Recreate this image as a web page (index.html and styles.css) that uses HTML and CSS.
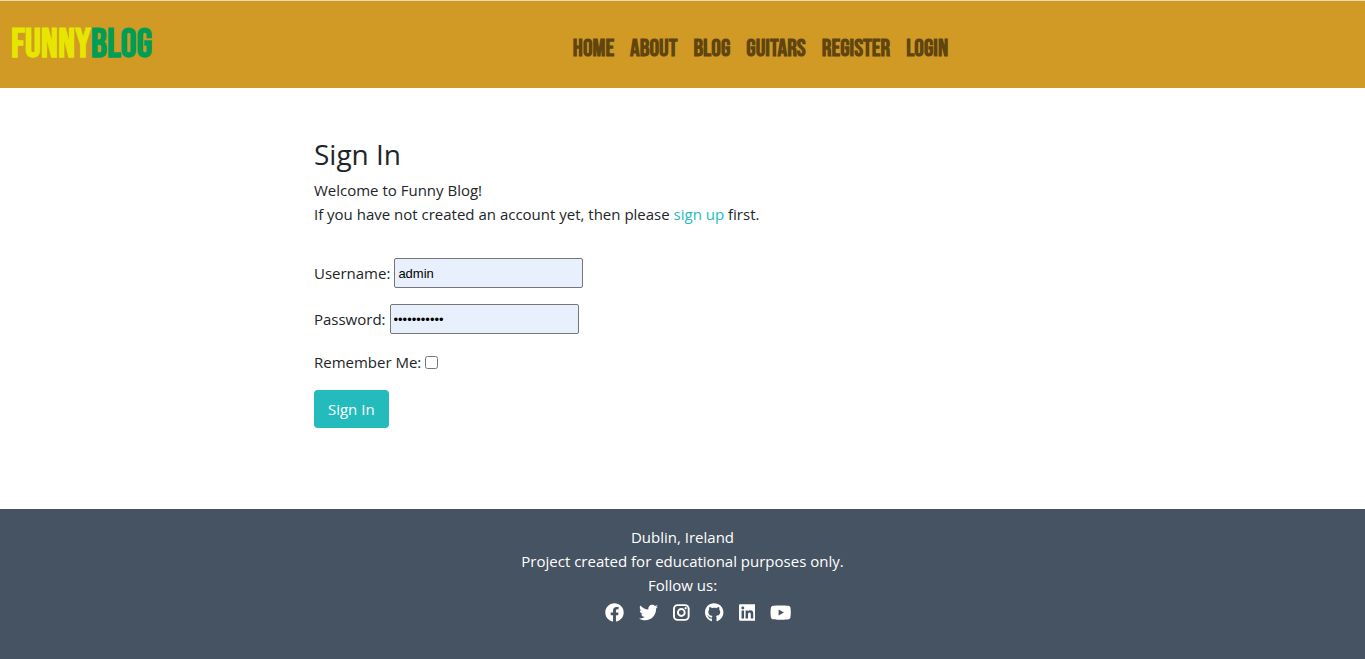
FILE: index.html
```html
<!DOCTYPE html>
<html lang="en">
<head>
<meta charset="utf-8">
<meta name="viewport" content="width=device-width, initial-scale=1">
<title>Funny Blog - Sign In</title>
<link rel="stylesheet" href="styles.css">
</head>
<body>
<header class="site-header">
  <a class="brand" href="#"><span class="brand-first">FUNNY</span><span class="brand-second">BLOG</span></a>
  <nav class="site-nav">
    <a href="#">HOME</a>
    <a href="#">ABOUT</a>
    <a href="#">BLOG</a>
    <a href="#">GUITARS</a>
    <a href="#">REGISTER</a>
    <a href="#">LOGIN</a>
  </nav>
</header>
<main class="content">
  <h1 class="title">Sign In</h1>
  <p class="intro">Welcome to Funny Blog!<br>If you have not created an account yet, then please <a class="link" href="#">sign up</a> first.</p>
  <form class="login-form">
    <div class="field"><label for="username">Username:</label><input class="text-input" id="username" type="text" value="admin"></div>
    <div class="field"><label for="password">Password:</label><input class="text-input" id="password" type="password" value="funnyblog12"></div>
    <div class="field"><label for="remember">Remember Me:</label><input class="check" id="remember" type="checkbox"></div>
    <button class="submit" type="submit">Sign In</button>
  </form>
</main>
<footer class="site-footer">
  <p>Dublin, Ireland</p>
  <p>Project created for educational purposes only.</p>
  <p>Follow us:</p>
  <div class="social">
    <a href="#" aria-label="Facebook"><svg viewBox="0 0 512 512"><path d="M504 256C504 119 393 8 256 8S8 119 8 256c0 123.78 90.69 226.38 209.25 245V327.69h-63V256h63v-54.64c0-62.15 37-96.48 93.67-96.48 27.14 0 55.52 4.84 55.52 4.84v61h-31.28c-30.8 0-40.41 19.12-40.41 38.73V256h68.78l-11 71.69h-57.78V501C413.31 482.38 504 379.78 504 256z"/></svg></a>
    <a href="#" aria-label="Twitter"><svg viewBox="0 0 512 512"><path d="M459.37 151.716c.325 4.548.325 9.097.325 13.645 0 138.72-105.583 298.558-298.558 298.558-59.452 0-114.68-17.219-161.137-47.106 8.447.974 16.568 1.299 25.34 1.299 49.055 0 94.213-16.568 130.274-44.832-46.132-.975-84.792-31.188-98.112-72.772 6.498.974 12.995 1.624 19.818 1.624 9.421 0 18.843-1.3 27.614-3.573-48.081-9.747-84.143-51.98-84.143-102.985v-1.299c13.969 7.797 30.214 12.67 47.431 13.319-28.264-18.843-46.781-51.005-46.781-87.391 0-19.492 5.197-37.36 14.294-52.954 51.655 63.675 129.3 105.258 216.365 109.807-1.624-7.797-2.599-15.918-2.599-24.04 0-57.828 46.782-104.934 104.934-104.934 30.213 0 57.502 12.67 76.67 33.137 23.715-4.548 46.456-13.32 66.599-25.34-7.798 24.366-24.366 44.833-46.132 57.827 21.117-2.273 41.584-8.122 60.426-16.243-14.292 20.791-32.161 39.308-52.628 54.253z"/></svg></a>
    <a href="#" aria-label="Instagram"><svg viewBox="0 0 448 512"><rect x="26" y="58" width="396" height="396" rx="100" fill="none" stroke="currentColor" stroke-width="52"/><circle cx="224" cy="256" r="92" fill="none" stroke="currentColor" stroke-width="52"/><circle cx="341" cy="139" r="30"/></svg></a>
    <a href="#" aria-label="GitHub"><svg viewBox="0 0 496 512"><path d="M244.8 8C106.1 8 0 113.3 0 252c0 110.9 69.8 205.8 169.5 239.2 12.8 2.3 17.3-5.6 17.3-12.1 0-6.2-.3-40.4-.3-61.4 0 0-70 15-84.7-29.8 0 0-11.4-29.1-27.8-36.6 0 0-22.9-15.7 1.6-15.4 0 0 24.9 2 38.6 25.8 21.9 38.6 58.6 27.5 72.9 20.9 2.3-16 8.8-27.1 16-33.7-55.9-6.2-112.3-14.3-112.3-110.5 0-27.5 7.6-41.3 23.6-58.9-2.6-6.5-11.1-33.3 2.6-67.9 20.9-6.5 69 27 69 27 20-5.6 41.5-8.5 62.8-8.5s42.8 2.9 62.8 8.5c0 0 48.1-33.6 69-27 13.7 34.7 5.2 61.4 2.6 67.9 16 17.7 25.8 31.5 25.8 58.9 0 96.5-58.9 104.2-114.8 110.5 9.2 7.9 17 22.9 17 46.4 0 33.7-.3 75.4-.3 83.6 0 6.5 4.6 14.4 17.3 12.1C428.2 457.8 496 362.9 496 252 496 113.3 383.5 8 244.8 8z"/></svg></a>
    <a href="#" aria-label="LinkedIn"><svg viewBox="0 0 448 512"><path d="M416 32H31.9C14.3 32 0 46.5 0 64.3v383.4C0 465.5 14.3 480 31.9 480H416c17.6 0 32-14.5 32-32.3V64.3c0-17.8-14.4-32.3-32-32.3zM135.4 416H69V202.2h66.5V416zm-33.2-243c-21.3 0-38.5-17.3-38.5-38.5S80.9 96 102.2 96c21.2 0 38.5 17.3 38.5 38.5 0 21.3-17.2 38.5-38.5 38.5zm282.1 243h-66.4V312c0-24.8-.5-56.7-34.5-56.7-34.6 0-39.9 27-39.9 54.9V416h-66.4V202.2h63.7v29.2h.9c8.9-16.8 30.6-34.5 62.9-34.5 67.2 0 79.7 44.3 79.7 101.9V416z"/></svg></a>
    <a href="#" aria-label="YouTube"><svg viewBox="0 0 576 512"><path d="M549.655 124.083c-6.281-23.65-24.787-42.276-48.284-48.597C458.781 64 288 64 288 64S117.22 64 74.629 75.486c-23.497 6.322-42.003 24.947-48.284 48.597-11.412 42.867-11.412 132.305-11.412 132.305s0 89.438 11.412 132.305c6.281 23.65 24.787 41.5 48.284 47.821C117.22 448 288 448 288 448s170.78 0 213.371-11.486c23.497-6.321 42.003-24.171 48.284-47.821 11.412-42.867 11.412-132.305 11.412-132.305s0-89.438-11.412-132.305zm-317.51 213.508V175.185l142.739 81.205-142.739 81.201z"/></svg></a>
  </div>
</footer>
</body>
</html>
```
FILE: styles.css
```css
* { box-sizing: border-box; }
body {
  margin: 0;
  min-height: 100vh;
  display: flex;
  flex-direction: column;
  background: #fff;
  color: #212529;
  font: 400 15px/24px "Open Sans", "Noto Sans", sans-serif;
}
a { color: inherit; text-decoration: none; }
p { margin: 0; }
.site-header {
  display: grid;
  grid-template-columns: 1fr auto 1fr;
  align-items: center;
  height: 88px;
  padding: 0 11px;
  background: #d09a25;
  border-top: 1px solid #f3d9b4;
  font-family: "Bebas Neue", "Liberation Sans Narrow", sans-serif;
  font-weight: 700;
}
.brand { font-size: 40px; line-height: 40px; }
.brand-first { color: #e6e600; }
.brand-second { color: #009e55; }
.site-nav {
  display: flex;
  gap: 16px;
  margin: 8px 0 0 156px;
  color: #60450f;
  font-size: 24px;
  line-height: 24px;
}
.content { width: 54%; margin: 0 auto; padding: 48px 0; flex: 1; }
.title { margin: 0 0 6px; font-size: 28px; line-height: 36px; font-weight: 500; }
.intro { margin-bottom: 32px; }
.link { color: #24bbbc; }
.login-form { display: flex; flex-direction: column; align-items: flex-start; gap: 16px; }
.field { display: flex; align-items: center; gap: 4px; }
.text-input {
  width: 189px;
  height: 30px;
  padding: 1px 3px;
  border: 1px solid #767676;
  border-radius: 2px;
  background: #e8f0fe;
  color: #000;
  font: 13px "Liberation Sans", Arial, sans-serif;
}
.check { width: 13px; height: 13px; margin: 0; }
.submit {
  height: 38px;
  padding: 0 14px;
  border: 0;
  border-radius: 4px;
  background: #24bbbc;
  color: #fff;
  font: 400 15px/24px "Open Sans", sans-serif;
}
.site-footer {
  min-height: 150px;
  padding: 16px;
  background: #465362;
  color: #fff;
  text-align: center;
}
.social { display: flex; justify-content: center; align-items: center; gap: 15px; height: 30px; padding-left: 32px; }
.social a { display: flex; }
.social svg { height: 19px; fill: currentColor; }
```
